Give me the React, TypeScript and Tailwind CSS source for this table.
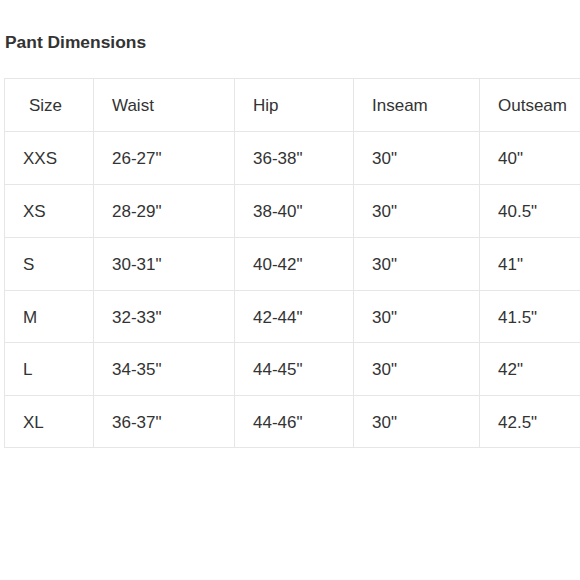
const headers = ["Size", "Waist", "Hip", "Inseam", "Outseam"];

const rows: { cells: string[]; h: string }[] = [
  { cells: ["XXS", '26-27"', '36-38"', '30"', '40"'], h: "h-[53px]" },
  { cells: ["XS", '28-29"', '38-40"', '30"', '40.5"'], h: "h-[53px]" },
  { cells: ["S", '30-31"', '40-42"', '30"', '41"'], h: "h-[53px]" },
  { cells: ["M", '32-33"', '42-44"', '30"', '41.5"'], h: "h-[52px]" },
  { cells: ["L", '34-35"', '44-45"', '30"', '42"'], h: "h-[53px]" },
  { cells: ["XL", '36-37"', '44-46"', '30"', '42.5"'], h: "h-[52px]" },
];

const widths = ["w-[89px]", "w-[141px]", "w-[119px]", "w-[126px]", "w-[120px]"];

export default function App() {
  return (
    <div className="h-[580px] w-[580px] overflow-hidden bg-white font-['Liberation_Sans',Arial,sans-serif] text-[#333]">
      <h1 className="pl-[5px] pt-[32px] text-[17.4px] leading-[20px] font-bold">Pant Dimensions</h1>

      <div className="ml-[4px] mt-[26px]">
        <table className="w-[595px] table-fixed border-collapse text-[17px]">
          <colgroup>
            {widths.map((w, i) => (
              <col key={i} className={w} />
            ))}
          </colgroup>
          <thead>
            <tr className="h-[53px]">
              {headers.map((h, i) => (
                <th
                  key={h}
                  className={`border border-[#e6e6e6] pt-[2px] text-left align-middle font-normal ${
                    i === 0 ? "pl-[24px]" : "pl-[18px]"
                  }`}
                >
                  {h}
                </th>
              ))}
            </tr>
          </thead>
          <tbody>
            {rows.map((r) => (
              <tr key={r.cells[0]} className={r.h}>
                {r.cells.map((c, i) => (
                  <td key={i} className="border border-[#e6e6e6] pt-[2px] pl-[18px] align-middle">
                    {c}
                  </td>
                ))}
              </tr>
            ))}
          </tbody>
        </table>
      </div>
    </div>
  );
}
